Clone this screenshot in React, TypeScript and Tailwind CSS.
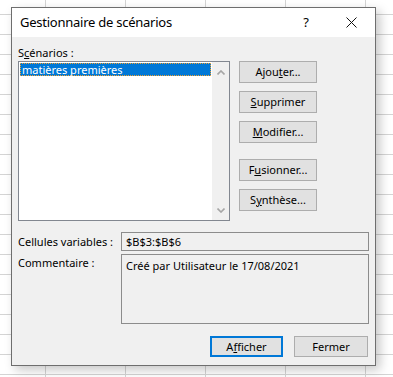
import React from 'react';

const btn =
  'flex items-center justify-center w-[78px] h-[22px] border border-[#adadad] bg-[#e1e1e1] text-black';

function Chevron({ up }: { up?: boolean }) {
  return (
    <svg width="8" height="5" viewBox="0 0 8 5" className="block">
      <path
        d={up ? 'M0.5 4.5 L4 1 L7.5 4.5' : 'M0.5 0.5 L4 4 L7.5 0.5'}
        fill="none"
        stroke="#a6a6a6"
        strokeWidth="1.6"
      />
    </svg>
  );
}

export default function App() {
  return (
    <div className="w-[393px] h-[377px] overflow-hidden bg-white bg-[linear-gradient(to_right,#d4d4d4_1px,transparent_1px),linear-gradient(to_bottom,#d4d4d4_1px,transparent_1px)] [background-size:80px_20px] [background-position:45px_14px] pt-[7px] pl-[11px] font-['Noto_Sans',sans-serif]">
      <div className="w-[365px] h-[359px] flex flex-col border border-[#6e6e6e] bg-[#f0f0f0] shadow-[4px_4px_10px_rgba(0,0,0,0.22)]">
        {/* title bar */}
        <div className="h-[29px] shrink-0 flex items-center bg-white pl-[8px] pr-[18px] text-black">
          <span className="flex-1 whitespace-nowrap text-[13px] tracking-[-0.25px]">Gestionnaire de scénarios</span>
          <span className="text-[13px] mr-[37px]">?</span>
          <svg width="11" height="11" viewBox="0 0 11 11" className="block">
            <path d="M0.5 0.5 L10.5 10.5 M10.5 0.5 L0.5 10.5" stroke="#111" strokeWidth="1" />
          </svg>
        </div>

        <div className="flex-1 flex flex-col px-[6px] pt-[8px] text-[11px] leading-[16px] text-black whitespace-nowrap">
          <div className="h-[16px]">
            S<span className="underline">c</span>énarios :
          </div>

          <div className="flex gap-[9px]">
            <div className="w-[212px] h-[160px] flex border border-[#828790] bg-white">
              <div className="flex-1 p-[1px]">
                <div className="h-[13px] leading-[11px] pl-[1px] border border-dotted border-[#f0a030] bg-[#0078d7] text-white">
                  matières premières
                </div>
              </div>
              <div className="w-[17px] bg-[#f0f0f0] flex flex-col items-center justify-between pt-[8px] pb-[7px]">
                <Chevron up />
                <Chevron />
              </div>
            </div>

            <div className="flex flex-col">
              <div className={btn}>
                Ajou<span className="underline">t</span>er...
              </div>
              <div className={btn + ' mt-[8px]'}>
                <span className="underline">S</span>upprimer
              </div>
              <div className={btn + ' mt-[8px]'}>
                <span className="underline">M</span>odifier...
              </div>
              <div className={btn + ' mt-[16px]'}>
                F<span className="underline">u</span>sionner...
              </div>
              <div className={btn + ' mt-[8px]'}>
                S<span className="underline">y</span>nthèse...
              </div>
            </div>
          </div>

          <div className="mt-[11px] flex items-center">
            <div className="w-[103px]">Cellules variables :</div>
            <div className="w-[248px] h-[19px] border border-[#8c8c8c] px-[4px] leading-[17px]">
              $B$3:$B$6
            </div>
          </div>

          <div className="mt-[3px] flex items-start">
            <div className="w-[103px] pt-[1px]">Commentaire :</div>
            <div className="w-[248px] h-[70px] border border-[#8c8c8c] px-[4px] pt-[3px]">
              Créé par Utilisateur le 17/08/2021
            </div>
          </div>

          <div className="mt-[12px] flex justify-end gap-[11px] pr-[1px]">
            <div className="flex items-center justify-center w-[73px] h-[21px] border-2 border-[#0078d7] bg-[#e1e1e1]">
              A<span className="underline">f</span>ficher
            </div>
            <div className="flex items-center justify-center w-[74px] h-[21px] border border-[#adadad] bg-[#e1e1e1]">
              Fermer
            </div>
          </div>
        </div>
      </div>
    </div>
  );
}
